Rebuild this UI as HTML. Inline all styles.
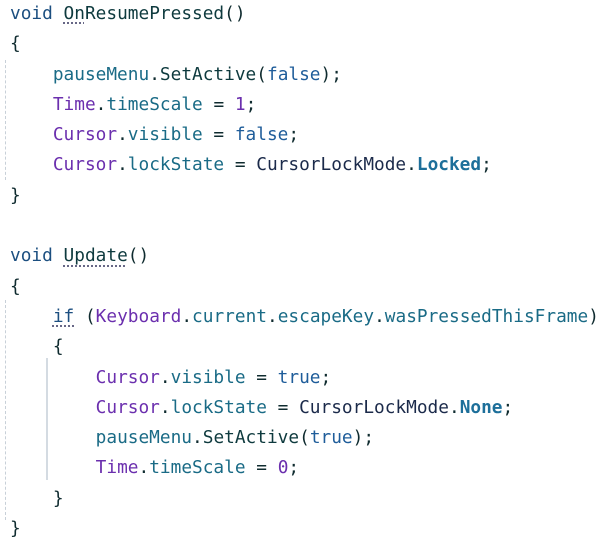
<!DOCTYPE html>
<html><head><style>
body{margin:0;width:600px;height:542px;background:#fff;overflow:hidden;position:relative}
pre{margin:0;position:absolute;left:10px;top:-1px;font-family:"DejaVu Sans Mono","Liberation Mono",monospace;font-size:17.8px;line-height:30.3px;color:#0f2b2f}
.k{color:#1c4f80}.m{color:#0e3a3e}.c{color:#6b2fae}.p{color:#1a6b86}.v{color:#1f5d9a}.e{color:#1d6f9a;font-weight:bold}.t{color:#1b2a4a}
.u{text-decoration:underline dotted #557;text-underline-offset:4px}
.g{position:absolute;border-left:1px dashed #c8d0d8;width:0}
.g2{position:absolute;border-left:2px solid #d4dbe2;width:0}
</style></head><body>
<div class="g" style="left:5px;top:60px;height:120px"></div>
<div class="g" style="left:5px;top:300px;height:220px"></div>
<div class="g2" style="left:46px;top:358px;height:122px"></div>
<pre><span class="k">void</span> <span class="m u">On</span><span class="m">ResumePressed</span>()
{
    <span class="p">pauseMenu</span>.<span class="m">SetActive</span>(<span class="v">false</span>);
    <span class="c">Time</span>.<span class="p">timeScale</span> = <span class="c">1</span>;
    <span class="c">Cursor</span>.<span class="p">visible</span> = <span class="v">false</span>;
    <span class="c">Cursor</span>.<span class="p">lockState</span> = <span class="t">CursorLockMode</span>.<span class="e">Locked</span>;
}

<span class="k">void</span> <span class="m u">Update</span>()
{
    <span class="k u">if</span> (<span class="c">Keyboard</span>.<span class="p">current</span>.<span class="p">escapeKey</span>.<span class="p">wasPressedThisFrame</span>)
    {
        <span class="c">Cursor</span>.<span class="p">visible</span> = <span class="v">true</span>;
        <span class="c">Cursor</span>.<span class="p">lockState</span> = <span class="t">CursorLockMode</span>.<span class="e">None</span>;
        <span class="p">pauseMenu</span>.<span class="m">SetActive</span>(<span class="v">true</span>);
        <span class="c">Time</span>.<span class="p">timeScale</span> = <span class="c">0</span>;
    }
}</pre>
</body></html>
